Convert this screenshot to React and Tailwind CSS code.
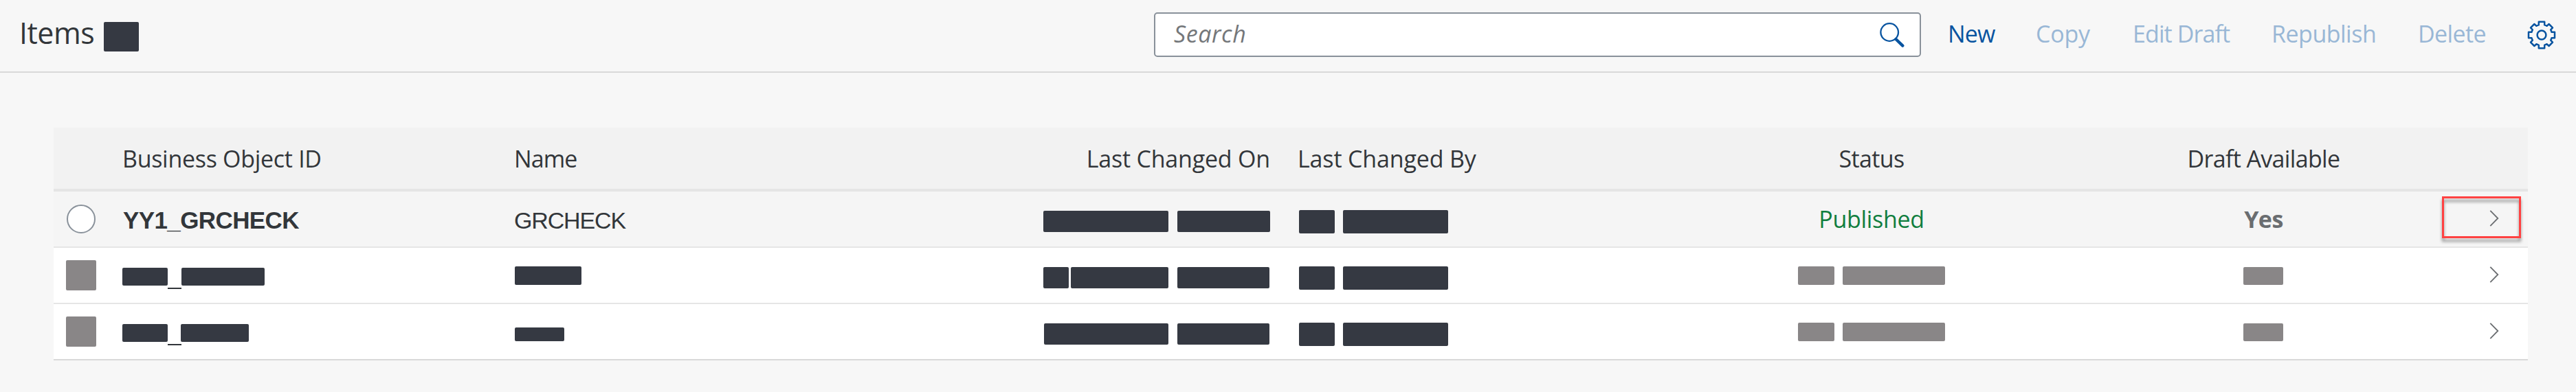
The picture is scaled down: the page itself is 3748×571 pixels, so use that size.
const DARK = 'bg-[#353942]';
const GRAY = 'bg-[#898687]';

const COLS = 'grid grid-cols-[100px_571px_769px_330px_598px_554px_587px_91px]';

function Bar({ className }) {
  return <span className={`block shrink-0 rounded-[2px] ${className}`} />;
}

function SearchIcon() {
  return (
    <svg className="h-[38px] w-[38px]" viewBox="0 0 38 38" fill="none" stroke="#0854a0">
      <circle cx="14.2" cy="15" r="12.8" strokeWidth="2.3" />
      <path d="M23.4 25 33.4 34.6" strokeWidth="4.4" strokeLinecap="round" />
    </svg>
  );
}

function GearIcon() {
  return (
    <svg className="h-[42px] w-[42px]" viewBox="-21 -21 42 42" fill="none" stroke="#0854a0" strokeWidth="2.5" strokeLinejoin="round">
      <path d="M-4.2 -19.2 H4.2 V-14.6 Q6.2 -14 7.6 -13.2 L10.6 -16 L16 -10.6 L13.2 -7.6 Q14 -6.2 14.6 -4.2 H19 V4.2 H14.6 Q14 6.2 13.2 7.6 L16 10.6 L10.6 16 L7.6 13.2 Q6.2 14 4.2 14.6 V19.2 H-4.2 V14.6 Q-6.2 14 -7.6 13.2 L-10.6 16 L-16 10.6 L-13.2 7.6 Q-14 6.2 -14.6 4.2 H-19 V-4.2 H-14.6 Q-14 -6.2 -13.2 -7.6 L-16 -10.6 L-10.6 -16 L-7.6 -13.2 Q-6.2 -14 -4.2 -14.6 Z" />
      <circle cx="0" cy="0" r="6.4" />
    </svg>
  );
}

function Chevron() {
  return (
    <svg className="ml-[34px] mt-[27px] h-[24px] w-[15px]" viewBox="0 0 15 24" fill="none" stroke="#6a6d70" strokeWidth="1.8">
      <path d="M2.3 0.8 13.3 12 2.3 23.2" />
    </svg>
  );
}

function Toolbar() {
  return (
    <header className="flex h-[106px] items-start border-b-2 border-[#d9d9d9]">
      <h1 className="ml-[28px] mt-[18px] w-[123px] text-[43px] font-[450] leading-[60px] tracking-[-0.5px]">Items</h1>
      <Bar className={`mt-[32px] h-[43px] w-[51px] ${DARK}`} />
      <div className="ml-[1477px] mt-[18px] flex h-[65px] w-[1116px] justify-between rounded-[5px] border-2 border-[#89919a] bg-white pl-[27px] pr-[20px]">
        <span className="mt-[9px] text-[34px] italic leading-[40px] tracking-[0.6px] text-[#74777a]">Search</span>
        <span className="mt-[12px]"><SearchIcon /></span>
      </div>
      <nav className="mt-[29px] flex text-[34px] leading-[40px] text-[#99b7d6]">
        <span className="ml-[39px] w-[128px] tracking-[-0.8px] text-[#0854a0]">New</span>
        <span className="w-[141px] tracking-[-0.2px]">Copy</span>
        <span className="w-[202px] tracking-[-0.9px]">Edit Draft</span>
        <span className="w-[213px] tracking-[-0.5px]">Republish</span>
        <span className="w-[159px] tracking-[-0.6px]">Delete</span>
      </nav>
      <span className="mt-[30px]"><GearIcon /></span>
    </header>
  );
}

function HeaderRow() {
  return (
    <div className={`${COLS} h-[93px] border-b-4 border-[#e5e5e5] bg-[#f2f2f2] pt-[25px] text-[34px] leading-[40px]`}>
      <span />
      <span className="tracking-[-0.3px]">Business Object ID</span>
      <span className="-ml-px tracking-[-0.9px]">Name</span>
      <span className="text-right tracking-[-0.2px]">Last Changed On</span>
      <span className="pl-[40px] tracking-[-0.15px]">Last Changed By</span>
      <span className="text-center tracking-[-0.6px]">Status</span>
      <span className="text-center tracking-[-0.65px]">Draft Available</span>
      <span />
    </div>
  );
}

function ChangedBy() {
  return (
    <div className="flex gap-[12px] pl-[42px] pt-[27px]">
      <Bar className={`h-[34px] w-[52px] ${DARK}`} />
      <Bar className={`h-[34px] w-[153px] ${DARK}`} />
    </div>
  );
}

function PublishedRow() {
  return (
    <div className={`${COLS} h-[82px] border-b-2 border-[#e5e5e5] bg-[#f5f5f5] text-[34px] leading-[40px]`}>
      <span className="ml-[19px] mt-[19px] h-[42px] w-[42px] rounded-full border-2 border-[#89919a] bg-white" />
      <span className="pl-px pt-[22px] font-['Liberation_Sans',sans-serif] text-[35px] font-bold tracking-[-0.6px]">YY1_GRCHECK</span>
      <span className="-ml-px pt-[22px] font-['Liberation_Sans',sans-serif] tracking-[-1.15px]">GRCHECK</span>
      <div className="flex justify-end gap-[13px] pt-[28px]">
        <Bar className={`h-[31px] w-[182px] ${DARK}`} />
        <Bar className={`h-[31px] w-[135px] ${DARK}`} />
      </div>
      <ChangedBy />
      <span className="pt-[20px] text-center tracking-[-0.3px] text-[#107e3e]">Published</span>
      <span className="pt-[20px] text-center font-bold tracking-[-0.5px] text-[#6a6d70]">Yes</span>
      <div className="relative">
        <Chevron />
        <span className="absolute left-[-34px] top-[7px] h-[61px] w-[115px] border-[3px] border-[#ff4242] drop-shadow-[0_5px_2px_rgba(0,0,0,0.4)]" />
      </div>
    </div>
  );
}

function RedactedRow({ id, name, on, line }) {
  return (
    <div className={`${COLS} h-[82px] border-b-2 ${line} bg-white text-[34px] leading-[40px]`}>
      <Bar className={`ml-[18px] mt-[18px] h-[44px] w-[44px] ${GRAY}`} />
      <div className="flex pt-[29px]">
        <Bar className={`h-[26px] w-[66px] ${DARK}`} />
        <span className="mt-[29px] h-[2px] w-[20px] bg-[#32363a]" />
        <Bar className={`h-[26px] ${id} ${DARK}`} />
      </div>
      <div><Bar className={`${name} ${DARK}`} /></div>
      <div className="flex pt-[28px]">
        {on.map((w) => (
          <Bar key={w} className={`h-[31px] ${w} ${DARK}`} />
        ))}
      </div>
      <ChangedBy />
      <div className="flex gap-[12px] pl-[170px] pt-[27px]">
        <Bar className={`h-[27px] w-[53px] ${GRAY}`} />
        <Bar className={`h-[27px] w-[149px] ${GRAY}`} />
      </div>
      <div className="pl-[264px] pt-[28px]">
        <Bar className={`h-[26px] w-[58px] ${GRAY}`} />
      </div>
      <div><Chevron /></div>
    </div>
  );
}

export default function App() {
  return (
    <div className="h-[571px] w-[3748px] overflow-hidden bg-[#f7f7f7] font-['Open_Sans',sans-serif] font-[460] text-[#32363a]">
      <Toolbar />
      <main className="ml-[78px] mt-[80px] w-[3600px]">
        <HeaderRow />
        <PublishedRow />
        <RedactedRow
          id="w-[121px]"
          name="mt-[27px] h-[27px] w-[97px]"
          on={['w-[37px]', 'ml-[3px] w-[142px]', 'ml-[13px] w-[134px]']}
          line="border-[#e5e5e5]"
        />
        <RedactedRow
          id="ml-[-1px] w-[99px]"
          name="mt-[34px] h-[20px] w-[72px]"
          on={['ml-[1px] w-[181px]', 'ml-[13px] w-[134px]']}
          line="border-[#d9d9d9]"
        />
      </main>
    </div>
  );
}
